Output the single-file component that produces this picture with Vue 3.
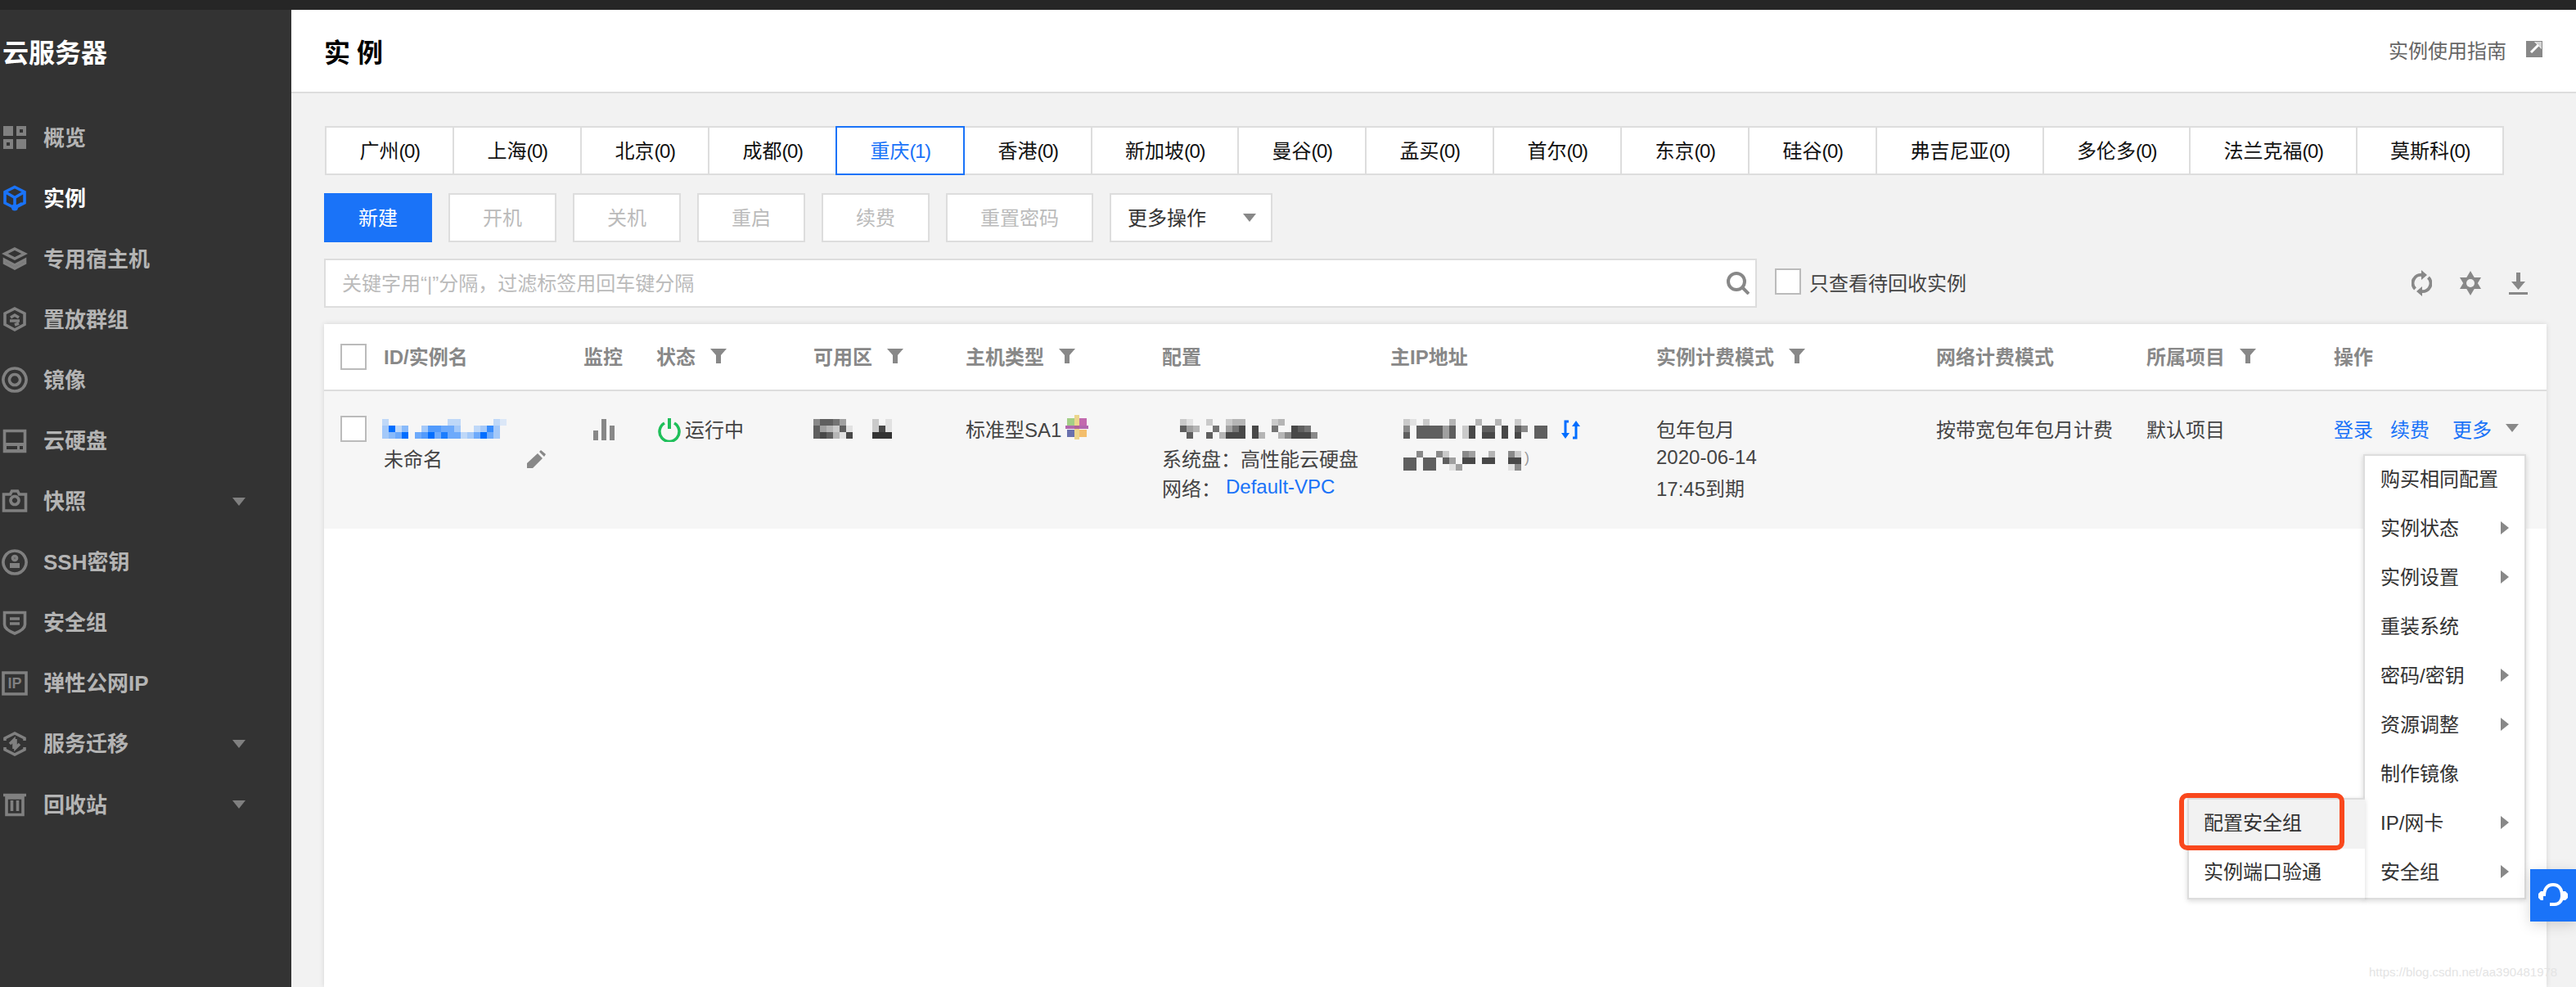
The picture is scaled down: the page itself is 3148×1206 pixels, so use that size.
<template>
  <div class="page">
    <div class="topbar"></div>
    <div class="body">
      <aside class="sidebar">
        <div class="side-title">云服务器</div>
        <nav class="nav">
          <div v-for="item in navItems" :key="item.label" :class="['nav-item', { active: item.active }]">
            <svg class="nav-icon" viewBox="0 0 32 32">
              <path v-if="item.fill" :d="item.fill" fill-rule="evenodd" class="icon-fill" />
              <path v-if="item.line" :d="item.line" class="icon-line" />
              <circle v-if="item.dot" :cx="item.dot[0]" :cy="item.dot[1]" :r="item.dot[2]" class="icon-fill" />
              <text v-if="item.text" x="16" y="22" text-anchor="middle" font-size="18" font-weight="700" font-family="Liberation Sans" class="icon-fill">{{ item.text }}</text>
            </svg>
            <span class="nav-label">{{ item.label }}</span>
            <i v-if="item.caret" class="nav-caret"></i>
          </div>
        </nav>
      </aside>

      <main class="main">
        <header class="header">
          <h1 class="header-title">实例</h1>
          <a class="guide">
            实例使用指南
            <svg class="guide-icon" viewBox="0 0 20 20">
              <path d="M0 0h20v20H0z" fill="#888" />
              <path d="M6 14L15 5" stroke="#fff" stroke-width="3" />
              <path d="M10 1h9v9z" fill="#fff" />
              <path d="M11 1h8v8z" fill="#888" opacity=".35" />
            </svg>
          </a>
        </header>

        <div class="content">
          <div class="tabs">
            <button
              v-for="tab in regionTabs"
              :key="tab.name"
              :class="['tab', 'chars-' + tab.name.length, { active: tab.count > 0 }]"
            >
              {{ tab.name }}<span class="tab-count">({{ tab.count }})</span>
            </button>
          </div>

          <div class="toolbar">
            <button class="btn primary">新建</button>
            <button v-for="name in disabledButtons" :key="name" :class="['btn', { wide: name.length > 2 }]">{{ name }}</button>
            <div class="select">更多操作<i class="caret"></i></div>
          </div>

          <div class="search-row">
            <div class="search">
              <span class="placeholder">关键字用“|”分隔，过滤标签用回车键分隔</span>
              <svg class="search-icon" viewBox="0 0 28 28">
                <circle cx="12" cy="12" r="10" fill="none" stroke="#888" stroke-width="4" />
                <path d="M18 18l9 9" stroke="#888" stroke-width="4" />
              </svg>
            </div>
            <label class="recycle"><span class="checkbox"></span>只查看待回收实例</label>
            <div class="tools">
              <svg class="tool-refresh" viewBox="0 0 25 32">
                <path d="M4.500 23A10 10 0 0 1 13 6M20.500 9A10 10 0 0 1 12 26" fill="none" stroke="#888" stroke-width="4" />
                <path d="M12 0l7 6-7 6zM13 32l-7-6 7-6z" fill="#888" />
              </svg>
              <svg class="tool-gear" viewBox="0 0 28 30">
                <path d="M14 0L27 22H1zM14 30L1 8h26z" fill="#888" />
                <circle cx="14" cy="15" r="5" fill="#f2f2f2" />
              </svg>
              <svg class="tool-download" viewBox="0 0 23 27">
                <path d="M9 0h5v11h6l-8.500 10L3 11h6z" fill="#888" />
                <path d="M0 25.500h23" stroke="#888" stroke-width="3" />
              </svg>
            </div>
          </div>

          <section class="card">
            <div class="table-head">
              <div class="cell-check"><span class="checkbox"></span></div>
              <div v-for="col in columns" :key="col.title" class="head-cell">
                {{ col.title }}
                <svg v-if="col.filter" class="filter" viewBox="0 0 20 18">
                  <path d="M0 0h20l-7 8v10H7V8z" fill="#888" />
                </svg>
              </div>
            </div>

            <div class="table-row">
              <div class="cell-check"><span class="checkbox"></span></div>

              <div class="cell">
                <div class="line shift"><svg class="mosaic" :width="mosaicWidth(idBlur)" height="24"><rect v-for="(r, i) in mosaicRects(idBlur)" :key="i" v-bind="r" fill="#006eff" /></svg></div>
                <div class="line name-line">
                  未命名
                  <svg class="pencil" viewBox="0 0 23 22">
                    <path d="M0 22v-6L13 4l6 6L7 22zM15 2l2-2 6 5-2 3z" fill="#888" />
                  </svg>
                </div>
              </div>

              <div class="cell">
                <svg class="bars" viewBox="0 0 26 26">
                  <path d="M0 14h6v12H0zM10 0h6v26h-6zM20 8h6v18h-6z" fill="#888" />
                </svg>
              </div>

              <div class="cell">
                <div class="line status">
                  <svg class="power" viewBox="0 0 28 30">
                    <path d="M8 7a12 12 0 1 0 12 0" fill="none" stroke="#1fbf5a" stroke-width="3.500" />
                    <path d="M14 1v13" stroke="#1fbf5a" stroke-width="4" />
                  </svg>
                  运行中
                </div>
              </div>

              <div class="cell">
                <div class="line zone">
                  <svg class="mosaic" :width="mosaicWidth(zoneBlur)" height="24"><rect v-for="(r, i) in mosaicRects(zoneBlur)" :key="i" v-bind="r" fill="#333" /></svg>
                  <svg class="mosaic" :width="mosaicWidth(zoneBlur2)" height="24"><rect v-for="(r, i) in mosaicRects(zoneBlur2)" :key="i" v-bind="r" fill="#333" /></svg>
                </div>
              </div>

              <div class="cell">
                <div class="line sa-line">
                  标准型SA1
                  <svg class="sa-icon" viewBox="0 0 30 30">
                    <rect x="12" y="0" width="6" height="30" fill="#e8c860" opacity=".7" />
                    <rect x="3" y="4" width="9" height="9" fill="#8ec46a" opacity=".8" />
                    <rect x="18" y="4" width="9" height="9" fill="#b5479c" opacity=".8" />
                    <rect x="1" y="13" width="28" height="4" fill="#a0459c" opacity=".8" />
                    <rect x="3" y="18" width="9" height="9" fill="#46509c" opacity=".8" />
                    <rect x="18" y="18" width="9" height="9" fill="#f2b04a" opacity=".8" />
                  </svg>
                </div>
              </div>

              <div class="cell">
                <div class="line shift-config"><svg class="mosaic" :width="mosaicWidth(configBlur)" height="24"><rect v-for="(r, i) in mosaicRects(configBlur)" :key="i" v-bind="r" fill="#333" /></svg></div>
                <div class="line">系统盘：高性能云硬盘</div>
                <div class="line">网络：<a class="link vpc">Default-VPC</a></div>
              </div>

              <div class="cell">
                <div class="line ip-line">
                  <svg class="mosaic" :width="mosaicWidth(ipBlur)" height="24"><rect v-for="(r, i) in mosaicRects(ipBlur)" :key="i" v-bind="r" fill="#333" /></svg>
                  <svg class="swap" viewBox="0 0 23 24">
                    <path d="M9 2H5v16M14 22h4V6" fill="none" stroke="#006eff" stroke-width="3" />
                    <path d="M0 16h10l-5 7zM13 8h10l-5-7z" fill="#006eff" />
                  </svg>
                </div>
                <div class="line ip-line2">
                  <svg class="mosaic" :width="mosaicWidth(ipBlur2)" height="24"><rect v-for="(r, i) in mosaicRects(ipBlur2)" :key="i" v-bind="r" fill="#333" /></svg>
                  <span class="paren">)</span>
                </div>
              </div>

              <div class="cell">
                <div class="line">包年包月</div>
                <div class="line">2020-06-14</div>
                <div class="line">17:45到期</div>
              </div>

              <div class="cell"><div class="line">按带宽包年包月计费</div></div>
              <div class="cell"><div class="line">默认项目</div></div>

              <div class="cell">
                <div class="line ops">
                  <a class="link">登录</a>
                  <a class="link">续费</a>
                  <a class="link">更多</a>
                  <i class="caret"></i>
                </div>
              </div>
            </div>

            <!-- выпадающее меню "更多" -->
            <ul class="menu">
              <li v-for="item in menuItems" :key="item.label" class="menu-item">
                {{ item.label }}
                <i v-if="item.sub" class="arrow"></i>
              </li>
              <ul class="submenu">
                <li class="sub-item hover">配置安全组</li>
                <li class="sub-item">实例端口验通</li>
                <span class="highlight"></span>
              </ul>
            </ul>
          </section>
        </div>
      </main>
    </div>

    <div class="help-btn">
      <svg class="help-icon" viewBox="0 0 36 32">
        <path d="M7 17C7 8 11 3 18 3s11 5 11 14c0 6-4 10-9 10h-6" fill="none" stroke="#fff" stroke-width="4" />
        <path d="M0 14l3-3h3v11H3l-3-3zM36 14l-3-3h-3v11h3l3-3z" fill="#fff" />
      </svg>
    </div>
    <div class="watermark">https://blog.csdn.net/aa390481978</div>
  </div>
</template>

<script setup>
const navItems = [
  { label: '概览', fill: 'M2 2h12v12H2zM18 2h12v12H18zM22 6v4h4V6zM2 18h12v12H2zM6 22v4h4v-4zM18 18h12v12H18z' },
  { label: '实例', active: true, line: 'M16 2.500L28 8.500V22L16 28 4 22V8.500zM5 9L16 15.500 27 9M16 15.500V24M16 27.500l9-5', dot: [16, 27.5, 4] },
  { label: '专用宿主机', line: 'M16 4l12 6-12 6-12-6zM3.500 17.500L16 24l12.500-6.500v4L16 28 3.500 21.500z' },
  { label: '置放群组', line: 'M16 3l12 6v13.500L16 29 4 22.500V9zM11 14l5-3 5 3M10 18h12M16 23l5-2' },
  { label: '镜像', line: 'M16 2a14 14 0 1 0 .01 0zM16 9.500a6.500 6.500 0 1 0 .01 0z' },
  { label: '云硬盘', line: 'M3.500 3.500h25v25h-25z', fill: 'M2 18h28v12H2zM6 22v4h13v-4zM22 22v4h4v-4z' },
  { label: '快照', caret: true, line: 'M2.500 7h8l2-4h7l2 4h8v20h-27zM16 9.500a5 5 0 1 0 .01 0z' },
  { label: 'SSH密钥', line: 'M16 2a14 14 0 1 0 .01 0zM16 8.500a2.500 2.500 0 1 0 .01 0z', fill: 'M10 17h12v6H10z' },
  { label: '安全组', line: 'M3.500 3.500h25V18c0 5-6 8.500-12.500 11C9.500 26.500 3.500 23 3.500 18zM10 11h12M10 17h12' },
  { label: '弹性公网IP', line: 'M2 3h28v26H2z', text: 'IP' },
  { label: '服务迁移', caret: true, line: 'M4 12V9L16 3l12 6v3M28 20v3l-12 6-12-6v-3M10 16l5-5v11M17 10v11l5-5' },
  { label: '回收站', caret: true, line: 'M6 8h20v20.500H6zM12.500 11v13M19.500 11v13M2 4.500h28' }
]

const regionTabs = [
  { name: '广州', count: 0 },
  { name: '上海', count: 0 },
  { name: '北京', count: 0 },
  { name: '成都', count: 0 },
  { name: '重庆', count: 1 },
  { name: '香港', count: 0 },
  { name: '新加坡', count: 0 },
  { name: '曼谷', count: 0 },
  { name: '孟买', count: 0 },
  { name: '首尔', count: 0 },
  { name: '东京', count: 0 },
  { name: '硅谷', count: 0 },
  { name: '弗吉尼亚', count: 0 },
  { name: '多伦多', count: 0 },
  { name: '法兰克福', count: 0 },
  { name: '莫斯科', count: 0 }
]

const disabledButtons = ['开机', '关机', '重启', '续费', '重置密码']

const columns = [
  { title: 'ID/实例名' },
  { title: '监控' },
  { title: '状态', filter: true },
  { title: '可用区', filter: true },
  { title: '主机类型', filter: true },
  { title: '配置' },
  { title: '主IP地址' },
  { title: '实例计费模式', filter: true },
  { title: '网络计费模式' },
  { title: '所属项目', filter: true },
  { title: '操作' }
]

const menuItems = [
  { label: '购买相同配置' },
  { label: '实例状态', sub: true },
  { label: '实例设置', sub: true },
  { label: '重装系统' },
  { label: '密码/密钥', sub: true },
  { label: '资源调整', sub: true },
  { label: '制作镜像' },
  { label: 'IP/网卡', sub: true },
  { label: '安全组', sub: true }
]

//打码区域：每个数字是一格 8px 方块的深浅 (0-9)
const idBlur = ['2000000000220000021', '3924003665530023730', '3459056958552359530']
const zoneBlur = ['577640', '743271', '787318']
const zoneBlur2 = ['201', '281', '999']
const configBlur = [
  '210020023300002300000',
  '743006046808006008760',
  '070070388808300358885'
]
const ipBlur = [
  '21020003000300300200000',
  '50777747028077080750770',
  '70777747028088080800770'
]
const ipBlur2 = [
  '005005200540030052',
  '770770740880880088',
  '770770014000000015'
]

function mosaicWidth(rows) {
  return rows[0].length * 8
}

function mosaicRects(rows) {
  const rects = []
  rows.forEach((row, y) => {
    row.split('').forEach((v, x) => {
      if (v !== '0') rects.push({ x: x * 8, y: y * 8, width: 8, height: 8, opacity: Number(v) / 9 })
    })
  })
  return rects
}
</script>

<style scoped>
.page {
  position: relative;
  display: flex;
  flex-direction: column;
  width: 3148px;
  height: 1206px;
  overflow: hidden;
  font-family: "Liberation Sans", "Noto Sans CJK SC", sans-serif;
  font-size: 24px;
  color: #444;
  background: #f2f2f2;
}

.topbar {
  height: 12px;
  background: #262626;
  flex-shrink: 0;
}

.body {
  display: flex;
  flex: 1;
  min-height: 0;
}

.sidebar {
  width: 356px;
  flex-shrink: 0;
  background: #333;
}

.side-title {
  height: 106px;
  line-height: 106px;
  padding-left: 3px;
  font-size: 32px;
  font-weight: 700;
  color: #fff;
}

.nav {
  margin-top: 13px;
}

.nav-item {
  display: flex;
  align-items: center;
  height: 74.100px;
  padding: 0 56px 0 2px;
  color: #b4b4b4;
  font-size: 26px;
  font-weight: 700;
}

.nav-item.active {
  color: #fff;
}

.nav-label {
  padding-bottom: 4px;
}

.nav-icon {
  width: 32px;
  height: 32px;
  margin-right: 19px;
  color: #808080;
  flex-shrink: 0;
}

.nav-item.active .nav-icon {
  color: #1a73f8;
}

.icon-fill {
  fill: currentColor;
}

.icon-line {
  fill: none;
  stroke: currentColor;
  stroke-width: 3.600;
}

.nav-caret {
  margin-left: auto;
  border-left: 8px solid transparent;
  border-right: 8px solid transparent;
  border-top: 10px solid #808080;
}

.main {
  display: flex;
  flex-direction: column;
  flex: 1;
  min-width: 0;
}

.header {
  display: flex;
  align-items: center;
  justify-content: space-between;
  height: 100px;
  padding: 0 41px 0 40px;
  background: #fff;
  border-bottom: 2px solid #ddd;
  flex-shrink: 0;
}

.header-title {
  margin: 0;
  font-size: 32px;
  font-weight: 700;
  letter-spacing: 8px;
  color: #000;
}

.guide {
  display: flex;
  align-items: center;
  padding-bottom: 4px;
  color: #666;
}

.guide-icon {
  width: 20px;
  height: 20px;
  margin-left: 24px;
}

.content {
  display: flex;
  flex-direction: column;
  flex: 1;
  min-height: 0;
  padding: 40px 36px 0 40px;
}

.tabs {
  display: flex;
  height: 60px;
  margin-left: 1px;
}

.tab {
  position: relative;
  height: 60px;
  box-sizing: border-box;
  margin-left: -2px;
  padding: 0 0 4px;
  border: 2px solid #ddd;
  background: #fff;
  font: inherit;
  color: #111;
}

.tab:first-child {
  margin-left: 0;
}

.chars-2 {
  width: 158px;
}

.chars-3 {
  width: 181px;
}

.chars-4 {
  width: 206px;
}

.tab-count {
  letter-spacing: -1.500px;
}

.tab.active {
  z-index: 1;
  border-color: #1a73f8;
  color: #1a73f8;
}

.toolbar {
  display: flex;
  gap: 20px;
  margin-top: 22px;
}

.btn {
  width: 132px;
  height: 60px;
  box-sizing: border-box;
  padding: 0 0 4px;
  border: 2px solid #ddd;
  background: #fff;
  font: inherit;
  color: #bbb;
}

.btn.wide {
  width: 180px;
}

.btn.primary {
  border-color: #1a73f8;
  background: #1a73f8;
  color: #fff;
}

.select {
  display: flex;
  align-items: center;
  justify-content: space-between;
  width: 199px;
  height: 60px;
  box-sizing: border-box;
  padding: 0 18px 4px 20px;
  border: 2px solid #ddd;
  background: #fff;
  color: #333;
}

.select .caret {
  margin-top: 4px;
}

.caret {
  border-left: 8px solid transparent;
  border-right: 8px solid transparent;
  border-top: 10px solid #888;
}

.search-row {
  display: flex;
  align-items: center;
  margin-top: 20px;
}

.search {
  display: flex;
  align-items: center;
  justify-content: space-between;
  width: 1751px;
  height: 60px;
  box-sizing: border-box;
  padding: 0 7px 0 20px;
  border: 2px solid #ddd;
  background: #fff;
}

.placeholder {
  padding-bottom: 4px;
  color: #bbb;
}

.search-icon {
  width: 28px;
  height: 28px;
}

.recycle {
  display: flex;
  align-items: center;
  margin-left: 22px;
  padding-bottom: 4px;
  color: #444;
}

.recycle .checkbox {
  margin-right: 10px;
}

.checkbox {
  display: block;
  width: 32px;
  height: 32px;
  box-sizing: border-box;
  border: 2px solid #bbb;
  background: #fff;
}

.tools {
  display: flex;
  align-items: center;
  margin-left: auto;
  margin-right: 23px;
}

.tool-refresh {
  width: 25px;
  height: 32px;
}

.tool-gear {
  width: 28px;
  height: 30px;
  margin-left: 33px;
}

.tool-download {
  width: 23px;
  height: 27px;
  margin-left: 33px;
}

.card {
  position: relative;
  flex: 1;
  margin-top: 20px;
  background: #fff;
  box-shadow: 0 0 6px rgba(0, 0, 0, 0.12);
}

.table-head,
.table-row {
  display: grid;
  grid-template-columns: 73px 244px 89px 192px 186px 240px 279px 325px 342px 257px 229px 1fr;
}

.table-head {
  align-items: center;
  height: 80px;
  border-bottom: 2px solid #ddd;
}

.cell-check {
  padding-left: 20px;
}

.table-row .cell-check {
  padding-top: 30px;
}

.head-cell {
  display: flex;
  align-items: center;
  padding-bottom: 4px;
  font-weight: 700;
  color: #888;
}

.filter {
  width: 20px;
  height: 18px;
  margin-left: 18px;
  margin-top: 2px;
}

.table-row {
  height: 168px;
  background: #f6f6f6;
}

.cell {
  padding-top: 27px;
}

.line {
  display: flex;
  align-items: center;
  height: 36px;
  white-space: nowrap;
}

.shift {
  margin-left: -2px;
}

.shift-config {
  margin-left: 22px;
}

.name-line {
  position: relative;
}

.pencil {
  position: absolute;
  left: 175px;
  top: 9px;
  width: 23px;
  height: 22px;
}

.bars {
  display: block;
  width: 26px;
  height: 26px;
  margin: 7px 0 0 12px;
}

.power {
  width: 28px;
  height: 30px;
  margin: 4px 5px 0 2px;
}

.zone {
  gap: 24px;
}

.sa-line {
  gap: 4px;
}

.sa-icon {
  width: 30px;
  height: 30px;
  margin-top: -2px;
}

.link {
  color: #1a73f8;
}

.vpc {
  margin-left: 6px;
}

.ip-line {
  margin-left: 16px;
}

.ip-line2 {
  margin-left: 16px;
}

.swap {
  width: 23px;
  height: 24px;
  margin: 4px 0 0 9px;
}

.paren {
  margin-left: 4px;
  font-size: 18px;
  color: #999;
}

.mosaic {
  display: block;
  flex-shrink: 0;
  margin-top: 2px;
}

.ip-line2 .mosaic {
  margin-top: 8px;
}

.ops .link:nth-child(2) {
  margin-left: 21px;
}

.ops .link:nth-child(3) {
  margin-left: 28px;
}

.ops .caret {
  margin-left: 17px;
}

.menu {
  position: absolute;
  top: 159px;
  right: 25px;
  width: 199px;
  box-sizing: border-box;
  margin: 0;
  padding: 0;
  list-style: none;
  background: #fff;
  border: 2px solid #ddd;
  box-shadow: 0 2px 6px rgba(0, 0, 0, 0.15);
  color: #333;
}

.menu-item {
  display: flex;
  align-items: center;
  justify-content: space-between;
  height: 60px;
  box-sizing: border-box;
  padding: 0 19px 8px 19px;
}

.arrow {
  margin-top: 4px;
  border-top: 8px solid transparent;
  border-bottom: 8px solid transparent;
  border-left: 10px solid #888;
}

.submenu {
  position: absolute;
  right: 100%;
  bottom: -2px;
  width: 215px;
  margin: 0;
  padding: 0;
  list-style: none;
  background: #fff;
  border: 2px solid #ddd;
  border-right: 0;
  box-shadow: 0 2px 6px rgba(0, 0, 0, 0.15);
}

.sub-item {
  display: flex;
  align-items: center;
  height: 60px;
  box-sizing: border-box;
  padding: 0 0 8px 18px;
}

.sub-item.hover {
  background: #f2f2f2;
}

.highlight {
  position: absolute;
  left: -12px;
  top: -8px;
  width: 202px;
  height: 70px;
  box-sizing: border-box;
  border: 6px solid #f9481d;
  border-radius: 10px;
}

.help-btn {
  position: absolute;
  top: 1062px;
  right: 0;
  display: flex;
  align-items: center;
  justify-content: center;
  width: 56px;
  height: 64px;
  background: #1a73f8;
  box-shadow: 0 4px 16px rgba(0, 0, 0, 0.15);
}

.help-icon {
  width: 36px;
  height: 32px;
}

.watermark {
  position: absolute;
  left: 2895px;
  top: 1178px;
  font-size: 15px;
  line-height: 20px;
  color: #e4e4e4;
  white-space: nowrap;
}
</style>

<style>
html,
body {
  margin: 0;
  background: #f2f2f2;
}
</style>
